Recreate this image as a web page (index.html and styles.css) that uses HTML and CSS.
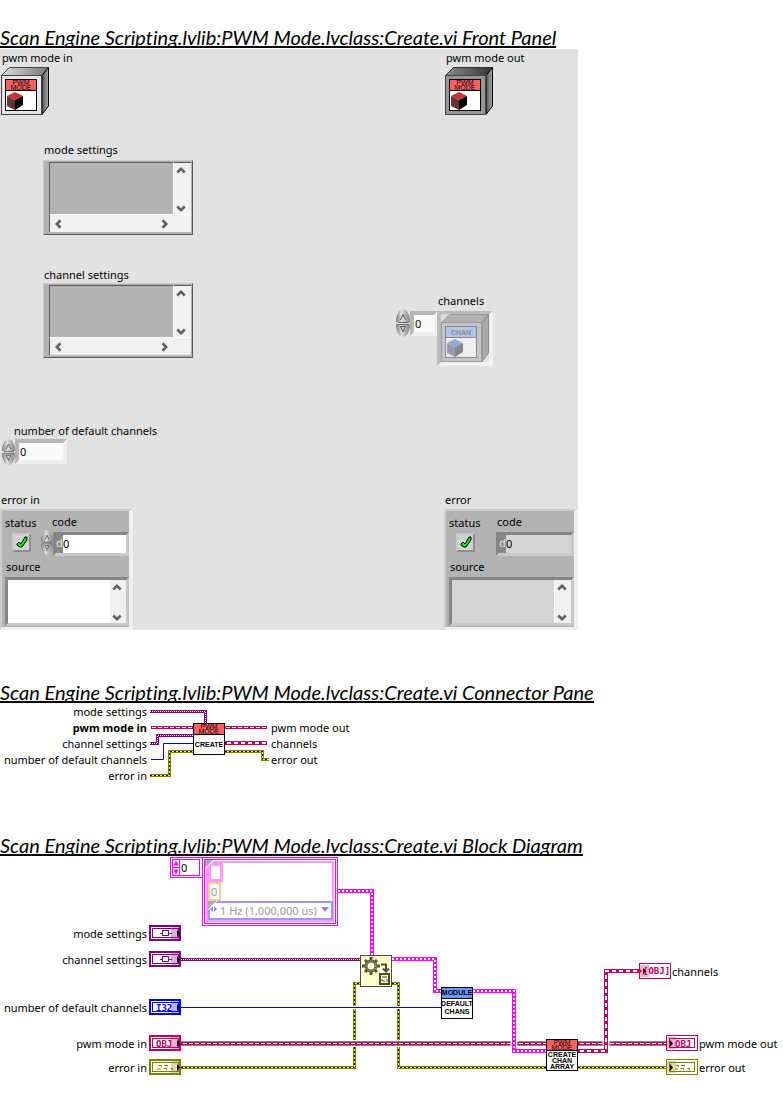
FILE: index.html
```html
<!DOCTYPE html>
<html lang="en">
<head>
<meta charset="utf-8">
<title>PWM Mode Create.vi</title>
<link rel="stylesheet" href="styles.css">
</head>
<body>
<svg class="defs" width="0" height="0" aria-hidden="true">
  <defs>
    <linearGradient id="lightTop" x1="0" x2="1"><stop offset="0" stop-color="#dcdcdc"/><stop offset="1" stop-color="#777"/></linearGradient>
    <linearGradient id="darkTop" x1="0" x2="1"><stop offset="0" stop-color="#8c8c8c"/><stop offset="1" stop-color="#333"/></linearGradient>
    <linearGradient id="side" x1="0" x2="1"><stop offset="0" stop-color="#555"/><stop offset="1" stop-color="#aaa"/></linearGradient>
    <linearGradient id="knob" x1="0" x2="1"><stop offset="0" stop-color="#777"/><stop offset=".4" stop-color="#e2e2e2"/><stop offset="1" stop-color="#808080"/></linearGradient>
    <symbol id="pwmFace" viewBox="0 0 32 32">
      <rect x=".5" y=".5" width="31" height="31" fill="#fff" stroke="#000"/>
      <rect x="1" y="1" width="30" height="10" fill="#ff6060"/>
      <path d="M0 11.5H32" stroke="#000"/>
      <text class="pix thin" x="16" y="6">PWM</text>
      <text class="pix thin" x="16" y="11">MODE</text>
    </symbol>
    <symbol id="cube" viewBox="0 0 16 18">
      <path d="M8 0 16 4 8 8 0 4Z" fill="#cc3333"/><path d="M0 4 8 8V18L0 14Z" fill="#663333"/><path d="M8 8 16 4V13L8 18Z" fill="#000"/>
    </symbol>
    <symbol id="spin" viewBox="0 0 14 28">
      <path d="M7 0C11 0 14 6 14 13H0C0 6 3 0 7 0Z" fill="url(#knob)"/>
      <path d="M0 15H14C14 22 11 28 7 28S0 22 0 15Z" fill="url(#knob)"/>
      <path d="M2 13.5H13M2 15.5H13" stroke="#666"/>
      <path d="M4.500 11 7 5.500 9.500 11" fill="#ddd" stroke="#555"/>
      <path d="M4.500 17.500H9.500L7 23Z" fill="#ccc" stroke="#555"/>
    </symbol>
    <symbol id="chev" viewBox="0 0 8 8"><path d="M1 6 4 3 7 6" fill="none" stroke="#606060" stroke-width="2"/></symbol>
    <symbol id="tick" viewBox="0 0 12 13">
      <path d="M1 8 3 6 5 8 9 1H11V4L6 11H4L1 9Z" fill="#00f000" stroke="#000"/>
    </symbol>
  </defs>
</svg>

<main>
<section>
  <h1 class="title">Scan Engine Scripting.lvlib:PWM Mode.lvclass:Create.vi Front Panel</h1>
  <div class="panel">
    <div class="row">
      <figure class="object">
        <figcaption>pwm mode in</figcaption>
        <svg width="48" height="48" viewBox="0 0 48 48">
          <path d="M.5 8.500 8.500.5H47.500L41 8.500Z" fill="url(#lightTop)" stroke="#444"/>
          <path d="M41 8.500 47.500.5V39L41 47.500Z" fill="url(#side)" stroke="#000"/>
          <rect x=".5" y="8.500" width="40" height="39" fill="#e6e6e6" stroke="#444"/>
          <use href="#pwmFace" x="4" y="12" width="32" height="32"/>
          <use href="#cube" x="6" y="25" width="16" height="18"/>
        </svg>
      </figure>
      <figure class="object out">
        <figcaption>pwm mode out</figcaption>
        <svg width="48" height="48" viewBox="0 0 48 48">
          <path d="M.5 8.500 8.500.5H47.500L41 8.500Z" fill="url(#darkTop)" stroke="#333"/>
          <path d="M41 8.500 47.500.5V39L41 47.500Z" fill="url(#side)" stroke="#000"/>
          <rect x=".5" y="8.500" width="40" height="39" fill="#969696" stroke="#444"/>
          <use href="#pwmFace" x="4" y="12" width="32" height="32"/>
          <use href="#cube" x="6" y="25" width="16" height="18"/>
        </svg>
      </figure>
    </div>

    <div class="row settings-first">
      <div class="settings">
        <label for="mode">mode settings</label>
        <div class="tree">
          <textarea id="mode" readonly></textarea>
          <div class="vbar"><button aria-label="Scroll up"><svg><use href="#chev"/></svg></button><button class="down" aria-label="Scroll down"><svg><use href="#chev"/></svg></button></div>
          <div class="hbar"><button class="left" aria-label="Scroll left"><svg><use href="#chev"/></svg></button><button class="right" aria-label="Scroll right"><svg><use href="#chev"/></svg></button></div>
        </div>
      </div>
    </div>

    <div class="row settings-second">
      <div class="settings">
        <label for="chanset">channel settings</label>
        <div class="tree">
          <textarea id="chanset" readonly></textarea>
          <div class="vbar"><button aria-label="Scroll up"><svg><use href="#chev"/></svg></button><button class="down" aria-label="Scroll down"><svg><use href="#chev"/></svg></button></div>
          <div class="hbar"><button class="left" aria-label="Scroll left"><svg><use href="#chev"/></svg></button><button class="right" aria-label="Scroll right"><svg><use href="#chev"/></svg></button></div>
        </div>
      </div>
      <div class="channels">
        <label for="chanidx">channels</label>
        <div class="array">
          <svg width="14" height="28"><use href="#spin"/></svg>
          <input id="chanidx" class="number index" value="0">
          <div class="well">
            <svg width="48" height="48" viewBox="0 0 48 48">
              <path d="M0 0H8L0 8Z" fill="#ddd"/>
              <path d="M.5 8.500 8.500.5H47.500L41 8.500Z" fill="#b2b2b2" stroke="#999"/>
              <path d="M41 8.500 47.500.5V39L41 47.500Z" fill="#aaa" stroke="#888"/>
              <rect x=".5" y="8.500" width="40" height="39" fill="#c6c6c6" stroke="#999"/>
              <rect x="4.500" y="12.500" width="31" height="31" fill="#eee" stroke="#888"/>
              <path d="M5 13H35V23H5Z" fill="#b0c4f0"/><path d="M4 23.500H36" stroke="#888"/>
              <text class="pix faded" x="20" y="21">CHAN</text>
              <path d="M14 25 22 29 14 33 6 29Z" fill="#99acd8"/><path d="M6 29 14 33V43L6 39Z" fill="#9999b3"/><path d="M14 33 22 29V38L14 43Z" fill="#888"/>
            </svg>
          </div>
        </div>
      </div>
    </div>

    <div class="default-count">
      <label for="count">number of default channels</label>
      <div class="spinbox">
        <svg width="13" height="26"><use href="#spin"/></svg>
        <input id="count" class="number wide" value="0">
      </div>
    </div>

    <div class="row errors">
      <fieldset class="error">
        <legend>error in</legend>
        <div class="cluster">
          <div class="pair">
            <div class="status">
              <label for="st1">status</label>
              <span class="check"><input type="checkbox" id="st1" checked><svg width="12" height="13"><use href="#tick"/></svg></span>
            </div>
            <div class="code">
              <label for="code1">code</label>
              <div class="coderow"><svg width="12" height="25"><use href="#spin"/></svg><div class="codebox"><span>d</span><input id="code1" value="0"></div></div>
            </div>
          </div>
          <label class="source-label" for="src1">source</label>
          <div class="source"><textarea id="src1"></textarea><div class="vbar"><button aria-label="Scroll up"><svg><use href="#chev"/></svg></button><button class="down" aria-label="Scroll down"><svg><use href="#chev"/></svg></button></div></div>
        </div>
      </fieldset>
      <fieldset class="error readout">
        <legend>error</legend>
        <div class="cluster">
          <div class="pair">
            <div class="status">
              <label for="st2">status</label>
              <span class="check"><input type="checkbox" id="st2" checked><svg width="12" height="13"><use href="#tick"/></svg></span>
            </div>
            <div class="code">
              <label for="code2">code</label>
              <div class="coderow"><div class="codebox"><span>d</span><input id="code2" value="0" readonly></div></div>
            </div>
          </div>
          <label class="source-label" for="src2">source</label>
          <div class="source"><textarea id="src2" readonly></textarea><div class="vbar"><button aria-label="Scroll up"><svg><use href="#chev"/></svg></button><button class="down" aria-label="Scroll down"><svg><use href="#chev"/></svg></button></div></div>
        </div>
      </fieldset>
    </div>
  </div>
</section>

<section class="connector">
  <h2 class="title">Scan Engine Scripting.lvlib:PWM Mode.lvclass:Create.vi Connector Pane</h2>
  <svg class="canvas" width="400" height="90" viewBox="0 703 400 90">
    <defs><path id="paneError" d="M150 775.500H169.500V751.500H193M225 751.500H262.500V759.500H269"/></defs>
    <g class="dots"><path d="M150 711.500H205.500V723"/><path d="M150 743.500H157.500V735.500H193"/></g>
    <g class="dots-in"><path d="M150 711.500H205.500V723"/><path d="M150 743.500H157.500V735.500H193"/></g>
    <path class="int" d="M151 759.500H163.500V743.500H193"/>
    <path class="cls" d="M151 727.500H193M225 727.500H267"/><path class="cls-in" d="M152 727.500H193M226 727.500H267"/>
    <path class="arr" d="M225 743H267"/><path class="arr-in" d="M227 743H267"/>
    <use class="err" href="#paneError"/><use class="err-mid" href="#paneError"/><use class="err-in" href="#paneError"/>
    <use href="#pwmFace" x="193" y="723" width="32" height="32"/>
    <text class="pix" x="209" y="747">CREATE</text>
    <g class="lab end">
      <text x="147" y="716">mode settings</text><text class="bold" x="147" y="732">pwm mode in</text>
      <text x="147" y="748">channel settings</text><text x="147" y="764">number of default channels</text><text x="147" y="780">error in</text>
    </g>
    <g class="lab"><text x="271" y="732">pwm mode out</text><text x="271" y="748">channels</text><text x="271" y="764">error out</text></g>
  </svg>
</section>

<section class="block">
  <h2 class="title">Scan Engine Scripting.lvlib:PWM Mode.lvclass:Create.vi Block Diagram</h2>
  <div class="diagram">
  <svg class="canvas" width="783" height="220" viewBox="0 856 783 220">
    <defs><path id="blockError" d="M181 1067.500H354.500V983.500H360M392 983.500H398.500V1067.500H546M578 1067.500H666"/></defs>
    <use class="err" href="#blockError"/><use class="err-mid" href="#blockError"/><use class="err-in" href="#blockError"/>
    <path class="gap thin-gap" d="M352 1007.500H402"/><path class="gap" d="M352 1043.500H402"/>
    <path class="int" d="M181 1007.500H441"/>
    <path class="obj" d="M181 1043.500H546M578 1043.500H666"/><path class="cls" d="M181 1043.500H546M578 1043.500H666"/><path class="cls-in" d="M183 1043.500H546M580 1043.500H666"/>
    <path class="gap" d="M514 1040V1048M606 1040V1048"/>
    <path class="dots" d="M181 959.500H360"/><path class="dots-in" d="M181 959.500H360"/>
    <path class="pink" d="M338 891H372V955M392 959H435V991H441M473 991H514V1051H546"/>
    <path class="pink-in" d="M338 891H372V955M392 959H435V991H441M473 991H514V1051H546"/>
    <path class="arr" d="M578 1051H606V971H640"/><path class="arr-in" d="M580 1051H606V971H640"/>

    <g><rect x="360.500" y="955.500" width="31" height="31" fill="#ffffcc" stroke="#4c4c3c"/>
      <path d="M371 957V961M371 971V975M362 966H366M376 966H380M365 960 368 963M374 969 377 972M365 972 368 969M374 963 377 960" stroke="#555544" stroke-width="3"/>
      <circle cx="371" cy="966" r="5" fill="none" stroke="#555544" stroke-width="3"/>
      <circle cx="371" cy="966" r="5" fill="none" stroke="#ddddb0" stroke-width="1" stroke-dasharray="1 1"/>
      <path d="M381 964.500H386V970M383 968.500 386 971.500 389 968.500" fill="none" stroke="#4c4c3c" stroke-width="2"/>
      <rect x="380" y="974" width="9" height="10" fill="#ffffcc" stroke="#4c4c3c" stroke-width="2"/>
      <path d="M382 977H387M382 979V981H385M387 979V982" fill="none" stroke="#4c4c3c" stroke-width="1"/></g>

    <g><rect x="441.500" y="987.500" width="31" height="31" fill="#fff" stroke="#000"/><path d="M442 988H472V998H442Z" fill="#6699ff"/><path d="M441 998.500H473" stroke="#000"/>
      <text class="pix" x="457" y="995">MODULE</text><text class="pix" x="457" y="1006">DEFAULT</text><text class="pix" x="457" y="1014">CHANS</text></g>
    <use href="#pwmFace" x="546" y="1039" width="32" height="32"/>
    <text class="pix" x="562" y="1057">CREATE</text><text class="pix" x="562" y="1063">CHAN</text><text class="pix" x="562" y="1069">ARRAY</text>

    <g class="term purple"><rect class="outer" x="150" y="926" width="30" height="14"/><rect class="inner" x="152.500" y="928.500" width="26" height="9"/><path class="inner" d="M160 933.500H162M169 933.500H172"/><rect class="glyph" x="162.500" y="930.500" width="6" height="5"/><rect class="strip" x="171" y="927" width="8" height="12"/><path class="arrow" d="M177 930 180 933.500 177 937Z"/></g>
    <g class="term purple"><rect class="outer" x="150" y="952" width="30" height="14"/><rect class="inner" x="152.500" y="954.500" width="26" height="9"/><path class="inner" d="M160 959.500H162M169 959.500H172"/><rect class="glyph" x="162.500" y="956.500" width="6" height="5"/><rect class="strip" x="171" y="953" width="8" height="12"/><path class="arrow" d="M177 956 180 959.500 177 963Z"/></g>
    <g class="term blue"><rect class="outer" x="150" y="1000" width="30" height="14"/><rect class="inner" x="152.500" y="1002.500" width="26" height="9"/><text x="156" y="1011">I32</text><rect class="strip" x="171" y="1001" width="8" height="12"/><path class="arrow" d="M177 1004 180 1007.500 177 1011Z"/></g>
    <g class="term rose"><rect class="outer" x="150" y="1036" width="30" height="14"/><rect class="inner" x="152.500" y="1038.500" width="26" height="9"/><text x="156" y="1047">OBJ</text><rect class="strip" x="171" y="1037" width="8" height="12"/><path class="arrow" d="M177 1040 180 1043.500 177 1047Z"/></g>
    <g class="term olive"><rect class="outer" x="150" y="1060" width="30" height="14"/><rect class="inner" x="152.500" y="1062.500" width="26" height="9"/><path class="inner" d="M158.500 1065.500H161.500V1067M164 1065.500H168M157 1069H161M163.500 1068.500H166.500V1070M170.500 1068.500H172.500V1070"/><rect class="strip" x="171" y="1061" width="8" height="12"/><path class="arrow" d="M177 1064 180 1067.500 177 1071Z"/></g>

    <g class="term rose sink"><rect class="outer" x="639.500" y="963.500" width="31" height="15"/><text x="643" y="974">[OBJ]</text><rect class="strip" x="640" y="965" width="9" height="12"/><path d="M639 968 642 971 639 974Z" fill="#f00"/><path class="arrow" d="M643 968 646 971 643 975Z"/></g>
    <g class="term rose sink"><rect class="outer" x="666.500" y="1035.500" width="31" height="15"/><rect class="inner" x="669.500" y="1038.500" width="25" height="9"/><text x="675" y="1047">OBJ</text><rect class="strip" x="667" y="1037" width="9" height="12"/><path class="arrow" d="M670 1040 673 1043.500 670 1047Z"/></g>
    <g class="term olive sink"><rect class="outer" x="666.500" y="1059.500" width="31" height="15"/><rect class="inner" x="669.500" y="1062.500" width="25" height="9"/><path class="inner" d="M675.500 1065.500H678.500V1067M681 1065.500H685M675 1069H678M680.500 1068.500H683.500V1070M687.500 1068.500H689.500V1070"/><rect class="strip" x="667" y="1061" width="9" height="12"/><path class="arrow" d="M670 1064 673 1067.500 670 1071Z"/></g>

    <g class="const">
      <rect x="170.500" y="857.500" width="32" height="20"/><rect x="172.500" y="859.500" width="7" height="16"/><rect x="179.500" y="859.500" width="20" height="16"/>
      <path d="M174 865 176 861.500 178 865ZM174 870 176 873.500 178 870Z" fill="#f0f"/><path d="M173 867.500H179"/>
      <rect x="202.500" y="857.500" width="135" height="68"/><rect x="204.500" y="859.500" width="131" height="64"/>
      <rect class="soft" x="207" y="862" width="126" height="59"/>
    </g>
    <g class="lab end"><text x="147" y="938">mode settings</text><text x="147" y="964">channel settings</text><text x="147" y="1012">number of default channels</text><text x="147" y="1048">pwm mode in</text><text x="147" y="1072">error in</text></g>
    <g class="lab"><text x="672" y="976">channels</text><text x="699" y="1048">pwm mode out</text><text x="699" y="1072">error out</text></g>
  </svg>
  <input class="const-index" value="0" aria-label="Array index">
  <div class="const-cluster">
    <input class="const-string" aria-label="Name">
    <input class="const-number" value="0" aria-label="Value">
    <select class="const-ring" aria-label="Frequency"><option>1 Hz (1,000,000 us)</option></select>
    <svg class="marks" width="132" height="64"><path d="M1 1H9L1 9ZM4 42H12L4 50Z" fill="#aaa"/><path d="M1 10 10 1M4 51 13 42" stroke="#fff"/><path d="M117 48H125L121 53Z" fill="#88f"/><path d="M6 50 9 47V53ZM13 50 10 47V53Z" fill="#88f"/></svg>
  </div>
  </div>
</section>
</main>
</body>
</html>
```
FILE: styles.css
```css
* { box-sizing: border-box; }
body { margin: 0; background: #fff; color: #000; font: 11px/16px "Noto Sans", "Open Sans", sans-serif; }
.defs { position: absolute; }
svg { display: block; flex: none; }
label, figcaption, legend { display: block; white-space: nowrap; }
input, textarea, select, button { font: inherit; color: inherit; border: 0; border-radius: 0; margin: 0; padding: 0; min-width: 0; background: none; outline: 0; }
textarea { resize: none; display: block; }
figure, fieldset { margin: 0; padding: 0; border: 0; min-width: 0; }
legend { padding: 0; }

.title { width: fit-content; margin: 28px 0 0; border-bottom: 2px solid #000; font: italic 400 20px/18px Lato, sans-serif; font-variant-ligatures: none; white-space: nowrap; }
section { display: flow-root; }
.connector { padding-top: 25px; }
.block { padding-top: 15px; }

/* Front panel */
.panel { max-width: 578px; margin-top: 1px; background: #e2e2e2; padding-top: 1px; }
.row { display: flex; justify-content: space-between; align-items: flex-start; }
.object { display: grid; gap: 1px; padding-left: 1px; }
.object figcaption { padding-left: 1px; }
.out { width: 134px; }
.settings { width: 150px; margin-left: 43px; }
.settings label { padding-left: 1px; }
.settings-first { margin-top: 27px; }
.settings-first .settings { display: grid; gap: 2px; }
.settings-second { margin-top: 32px; }
.tree { display: grid; grid-template: 1fr 18px / 1fr 18px; height: 75px; padding: 1px 1px 2px 5px; background: #b3b3b3; border: 1px solid #cacaca; border-right-color: #5a5a5a; border-bottom-color: #5a5a5a; }
.tree textarea { width: 100%; height: 100%; border-top: 1px solid #5a5a5a; border-left: 1px solid #5a5a5a; background: #b3b3b3; }
.vbar { display: flex; flex-direction: column; justify-content: space-between; align-items: center; padding: 2px 3px 0 0; background: #f0f0f0; border-left: 1px solid #fff; }
.tree .vbar { border-top: 1px solid #5a5a5a; }
.hbar { grid-column: span 2; display: flex; justify-content: space-between; align-items: center; padding: 0 21px 0 3px; background: #f0f0f0; border-top: 1px solid #fff; border-left: 1px solid #5a5a5a; }
.vbar svg, .hbar svg { width: 10px; height: 10px; }
.down { transform: rotate(180deg); }
.left { transform: rotate(-90deg); }
.right { transform: rotate(90deg); }

.channels { margin: 26px 85px 0 0; }
.channels label { padding-left: 42px; }
.array { display: flex; align-items: flex-start; }
.number { height: 25px; border: 4px solid; border-color: #b6b6b6 #f0f0f0 #f0f0f0 #b6b6b6; background: #fafafa; padding-left: 1px; }
.index { width: 27px; margin-top: 2px; border-right-width: 3px; }
.well { margin-top: 2px; width: 56px; height: 55px; border: 4px solid; border-width: 3px 4px 4px; border-color: #bbb #f0f0f0 #f0f0f0 #bbb; }
.default-count { margin-top: 57px; padding-left: 2px; }
.default-count label { padding-left: 12px; }
.spinbox { display: flex; }
.wide { width: 52px; }
.errors { margin-top: 27px; }
.error { width: 133px; }
.error legend { padding-left: 1px; }
.cluster { height: 121px; margin-top: 1px; padding: 3px 0 0 3px; background: #b3b3b3; border: 2px solid; border-width: 2px 4px 3px 2px; border-color: #cdcdcd #f0f0f0 #f0f0f0 #cdcdcd; }
.error .pair { display: flex; gap: 5px; }
.status { width: 31px; padding-top: 1px; }
.check { display: grid; place-items: center; width: 19px; height: 19px; margin: 2px 0 0 7px; }
.check input { appearance: none; grid-area: 1 / 1; width: 19px; height: 19px; background: #d2d2d2; border: 2px solid; border-color: #c8c8c8 #8c8c8c #8c8c8c #c8c8c8; }
.check svg { grid-area: 1 / 1; pointer-events: none; }
.code { flex: 1; min-width: 0; }
.code label { padding-left: 11px; }
.coderow { display: flex; }
.codebox { display: flex; flex: 1; min-width: 0; height: 24px; margin-top: 2px; border: 3px solid; border-color: #858585 #c8c8c8 #c8c8c8 #858585; background: #fff; }
.codebox span { width: 7px; background: #888; color: #e8e8e8; }
.codebox input { flex: 1; width: 0; }
.source-label { padding: 3px 0 2px 1px; }
.source { display: grid; grid-template-columns: 1fr 17px; height: 49px; border: 3px solid; border-color: #858585 #c8c8c8 #c8c8c8 #858585; background: #fff; }
.source textarea { width: 100%; height: 100%; }
.readout { width: 134px; }
.readout .pair { gap: 16px; }
.readout .code label { padding-left: 1px; }
.readout .codebox, .readout .source { background: #d4d4d4; }

/* Diagram wires */
.dots, .dots-in, .int, .cls, .cls-in, .obj, .arr, .arr-in, .err, .err-mid, .err-in, .pink, .pink-in, .gap { fill: none; }
.dots { stroke: #800080; stroke-width: 3; }
.dots-in { stroke: #fff; stroke-width: 1; stroke-dasharray: 1 1; }
.int { stroke: #00f; }
.cls { stroke: #c00060; stroke-width: 3; }
.cls-in { stroke: #fff; stroke-width: 1; stroke-dasharray: 4 2; }
.obj { stroke: #888; stroke-width: 5; }
.arr { stroke: #c00060; stroke-width: 4; }
.arr-in { stroke: #fff; stroke-width: 2; stroke-dasharray: 4 3; }
.err { stroke: #808000; stroke-width: 3; }
.err-mid { stroke: #ff0; stroke-width: 1; }
.err-in { stroke: #000; stroke-width: 1; stroke-dasharray: 2 2; }
.pink { stroke: #f0f; stroke-width: 4; }
.pink-in { stroke: #fff; stroke-width: 2; stroke-dasharray: 2 2; }
.gap { stroke: #fff; stroke-width: 7; }
.thin-gap { stroke-width: 3; }
.lab { font-size: 11px; }
.end { text-anchor: end; }
.bold { font-weight: 700; }
.pix { font: 700 7px "Liberation Sans", sans-serif; text-anchor: middle; }
.thin { font-weight: 400; }
.faded { fill: #888; }

/* Terminals */
.purple { --c: #800080; }
.blue { --c: #00f; }
.rose { --c: #c00060; }
.olive { --c: #808000; }
.outer { fill: #fff; stroke: var(--c); stroke-width: 2; }
.sink .outer { stroke-width: 1; }
.inner { fill: none; stroke: var(--c); }
.glyph { fill: #fff; stroke: var(--c); }
.strip { fill: var(--c); opacity: .3; }
.arrow { fill: #000; }
.term text { fill: var(--c); font: 700 9px "DejaVu Sans Mono", monospace; }
.const rect { fill: #fff; stroke: #f0f; }
.const path { stroke: #f0f; }
.const .soft { stroke: #f9f; stroke-width: 2; }

/* Editable constants placed on the diagram canvas */
.diagram { position: relative; width: fit-content; }
.const-index { position: absolute; left: 181px; top: 4px; width: 17px; height: 15px; }
.const-cluster { position: absolute; left: 204px; top: 3px; width: 132px; height: 64px; padding: 4px; display: grid; grid-template-rows: 19px 19px 19px; color: #999; }
.const-string { width: 15px; border: 3px solid #f9f; background: #fff; }
.const-number { width: 13px; border: 2px solid #ffc896; background: #fff; padding-left: 1px; }
.const-ring { width: 125px; appearance: none; border: 2px solid #99f; background: #fff; padding-left: 10px; }
.marks { position: absolute; left: 0; top: 0; pointer-events: none; }
```
